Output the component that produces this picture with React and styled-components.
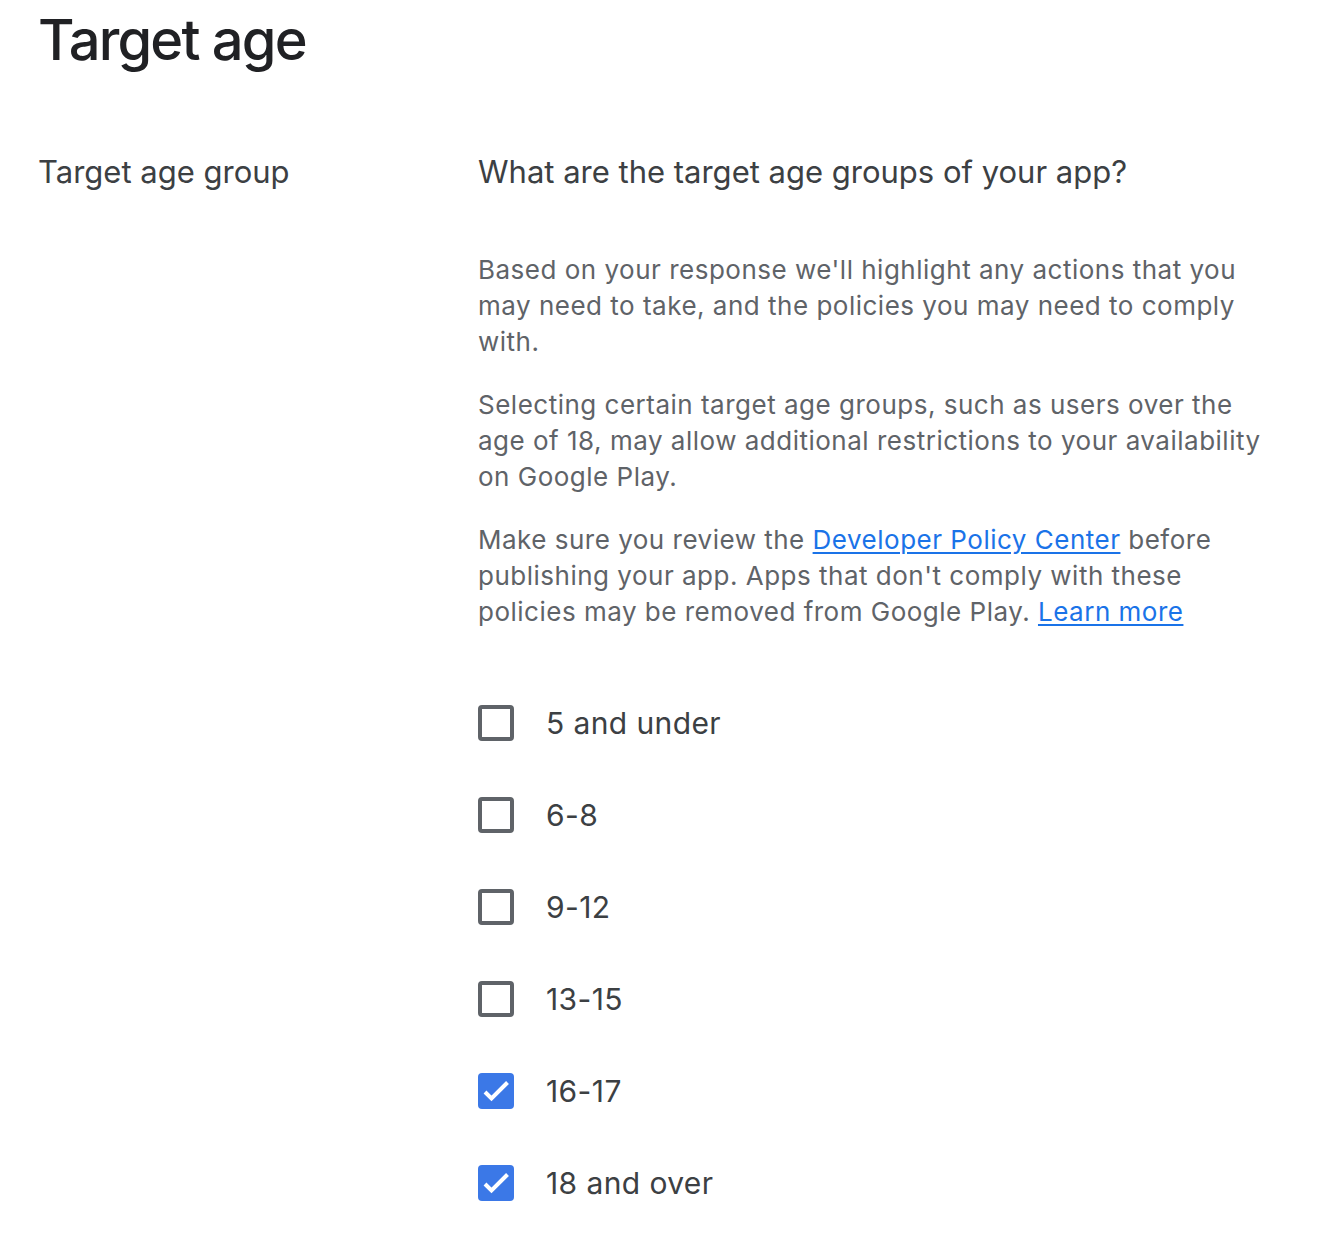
import React, { useState } from "react";
import styled, { createGlobalStyle } from "styled-components";

const GlobalStyle = createGlobalStyle`
  body {
    margin: 0;
    background: #ffffff;
    font-family: Inter, Roboto, "Noto Sans", Arial, sans-serif;
  }
`;

const Page = styled.main`
  padding: 0 38px 40px;
`;

const Title = styled.h1`
  margin: 0;
  padding-top: 8px;
  font-size: 56px;
  line-height: 64px;
  font-weight: 500;
  color: #202124;
  letter-spacing: -1.8px;
`;

const Section = styled.section`
  display: grid;
  grid-template-columns: 440px 802px;
  margin-top: 78px;
`;

const Label = styled.div`
  font-size: 31px;
  line-height: 44px;
  color: #3c4043;
`;

const Question = styled.div`
  font-size: 31px;
  line-height: 44px;
  color: #3c4043;
`;

const Info = styled.div`
  margin-top: 58px;
  display: flex;
  flex-direction: column;
  gap: 27px;
`;

const Para = styled.p`
  margin: 0;
  font-size: 26px;
  line-height: 36px;
  letter-spacing: 0.5px;
  color: #5f6368;
`;

const Link = styled.a`
  color: #1a73e8;
  text-decoration: underline;
  text-underline-offset: 3px;
  cursor: pointer;
`;

const Options = styled.div`
  margin-top: 75px;
  display: flex;
  flex-direction: column;
  gap: 56px;
`;

const Option = styled.label`
  display: flex;
  align-items: center;
  gap: 32px;
  cursor: pointer;
  font-size: 30px;
  line-height: 36px;
  letter-spacing: 0.4px;
  color: #3c4043;
`;

const Box = styled.span`
  width: 36px;
  height: 36px;
  box-sizing: border-box;
  border-radius: 4px;
  border: ${(p) => (p.$checked ? "none" : "4px solid #5f6368")};
  background: ${(p) => (p.$checked ? "#3b78e7" : "transparent")};
  display: flex;
  flex-shrink: 0;
`;

const Check = () => (
  <svg width="36" height="36" viewBox="0 0 36 36">
    <path d="M7 19l6.5 6.5L29.5 9.5" fill="none" stroke="#fff" strokeWidth="4" />
  </svg>
);

const groups = [
  { label: "5 and under", checked: false },
  { label: "6-8", checked: false },
  { label: "9-12", checked: false },
  { label: "13-15", checked: false },
  { label: "16-17", checked: true },
  { label: "18 and over", checked: true },
];

export default function App() {
  const [state, setState] = useState(groups);

  const toggle = (i) =>
    setState((s) => s.map((g, j) => (j === i ? { ...g, checked: !g.checked } : g)));

  return (
    <Page>
      <GlobalStyle />
      <Title>Target age</Title>
      <Section>
        <Label>Target age group</Label>
        <div>
          <Question>What are the target age groups of your app?</Question>
          <Info>
            <Para>
              Based on your response we'll highlight any actions that you may need to take, and the
              policies you may need to comply with.
            </Para>
            <Para>
              Selecting certain target age groups, such as users over the age of 18, may allow
              additional restrictions to your availability on Google Play.
            </Para>
            <Para>
              Make sure you review the <Link>Developer Policy Center</Link> before publishing your
              app. Apps that don't comply with these policies may be removed from Google Play.{" "}
              <Link>Learn more</Link>
            </Para>
          </Info>
          <Options>
            {state.map((g, i) => (
              <Option key={g.label} onClick={() => toggle(i)}>
                <Box $checked={g.checked}>{g.checked && <Check />}</Box>
                {g.label}
              </Option>
            ))}
          </Options>
        </div>
      </Section>
    </Page>
  );
}
